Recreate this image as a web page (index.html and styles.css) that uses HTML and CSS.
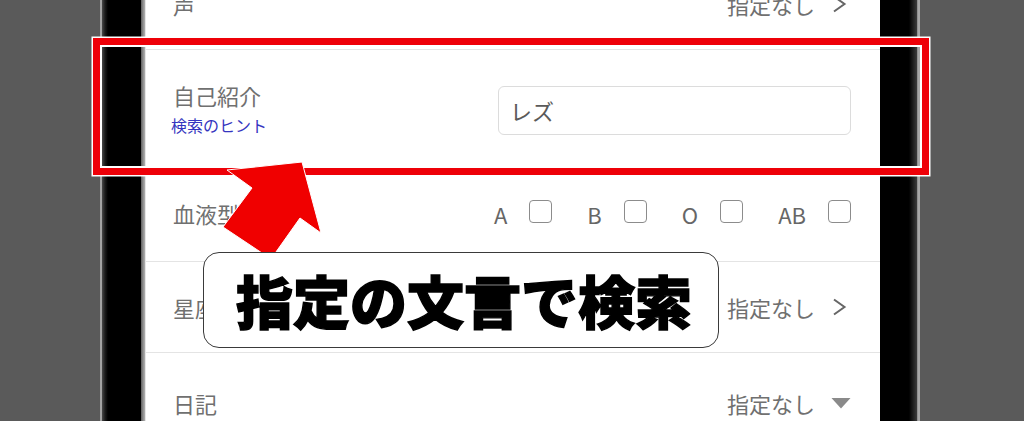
FILE: index.html
```html
<!DOCTYPE html>
<html lang="ja">
<head>
<meta charset="utf-8">
<title>検索条件</title>
<link rel="stylesheet" href="styles.css">
</head>
<body>
<div class="phone">
  <div class="bezel-l"></div>
  <div class="screen">
    <div class="list">
      <div class="row row-voice">
        <span class="label">声</span>
        <div class="value">
          <span>指定なし</span>
          <svg class="chev" viewBox="0 0 22 22"><path d="M5 3.5 L15.5 11 L5 18.5" fill="none" stroke="#666" stroke-width="2" stroke-linejoin="miter"/></svg>
        </div>
      </div>
      <div class="row row-intro">
        <div class="label-col">
          <span class="label">自己紹介</span>
          <span class="hint">検索のヒント</span>
        </div>
        <div class="input">レズ</div>
      </div>
      <div class="row row-blood">
        <span class="label">血液型</span>
        <div class="options">
          <div class="opt"><span>A</span><span class="cb"></span></div>
          <div class="opt"><span>B</span><span class="cb"></span></div>
          <div class="opt"><span>O</span><span class="cb"></span></div>
          <div class="opt"><span>AB</span><span class="cb"></span></div>
        </div>
      </div>
      <div class="row">
        <span class="label">星座</span>
        <div class="value">
          <span>指定なし</span>
          <svg class="chev" viewBox="0 0 22 22"><path d="M5 3.5 L15.5 11 L5 18.5" fill="none" stroke="#666" stroke-width="2"/></svg>
        </div>
      </div>
      <div class="row row-diary">
        <span class="label">日記</span>
        <div class="value">
          <span>指定なし</span>
          <svg class="chev" viewBox="0 0 22 22"><polygon points="2.5,6 21.5,6 12,16.5" fill="#8a8a8a"/></svg>
        </div>
      </div>
    </div>
  </div>
  <div class="bezel-r"></div>
</div>

<div class="highlight"></div>
<svg class="arrow" viewBox="0 0 1024 421" width="1024" height="421">
  <polygon points="302,162 321,233 300,218 271,259 223,227 252,188 227,170" fill="#f00000" stroke="#ffffff" stroke-width="1" stroke-linejoin="miter"/>
</svg>
<div class="callout"><span>指定の文言で検索</span></div>
</body>
</html>
```

FILE: styles.css
```css
* { box-sizing: content-box; }
html, body {
  margin: 0;
  padding: 0;
  width: 1024px;
  height: 421px;
  overflow: hidden;
  background: #5a5a5a;
  font-family: "Noto Sans CJK JP", "Noto Sans", sans-serif;
}
.phone {
  display: flex;
  margin-left: 100px;
  width: 820px;
  height: 421px;
}
.bezel-l {
  width: 46px;
  flex: none;
  background: linear-gradient(to right,
    #a4a4a4 0, #a4a4a4 2px,
    #4a4a4a 2px, #1c1c1c 5px, #000 8px,
    #000 41px, #5e5e5e 41px, #8c8c8c 43px, #b0b0b0 45px, #e6e6e6 45px, #e6e6e6 46px);
}
.bezel-r {
  width: 40px;
  flex: none;
  background: linear-gradient(to right,
    #000 0, #000 29px, #1e1e1e 33px, #3c3c3c 37px,
    #7a7a7a 37px, #a8a8a8 38px, #a8a8a8 40px);
}
.screen {
  width: 734px;
  flex: none;
  background: #fff;
  overflow: hidden;
}
.list {
  margin-top: -41px;
}
.row {
  display: flex;
  align-items: center;
  justify-content: space-between;
  height: 90px;
  padding: 0 29px 0 27px;
  border-bottom: 1px solid #e4e4e4;
  color: #707070;
  font-size: 22px;
}
.row-intro { height: 120px; }
.row-blood { height: 84px; padding-bottom: 6px; }
.row-diary { height: 100px; }
.label { line-height: 28px; }
.value {
  display: flex;
  align-items: center;
  gap: 14px;
}
.chev {
  width: 22px;
  height: 22px;
  display: block;
}
.label-col {
  display: flex;
  flex-direction: column;
  gap: 5px;
  margin-top: -4px;
}
.hint {
  font-size: 16px;
  line-height: 22px;
  color: #3535c0;
  margin-left: -2px;
}
.input {
  width: 340px;
  height: 47px;
  padding-left: 11px;
  border: 1px solid #dcdcdc;
  border-radius: 6px;
  display: flex;
  align-items: center;
  color: #5a5a5a;
  font-size: 22px;
}
.options {
  display: flex;
  align-items: center;
  gap: 35px;
}
.opt {
  display: flex;
  align-items: center;
  gap: 22px;
  font-size: 22px;
  color: #666;
}
.opt span:first-child { padding-top: 2px; }
.cb {
  width: 21px;
  height: 21px;
  border: 1.5px solid #8c8c8c;
  border-radius: 4px;
  margin-top: -4px;
}
.highlight {
  position: absolute;
  left: 93px;
  top: 38px;
  width: 822px;
  height: 123px;
  border: 7px solid #ee0008;
  box-shadow: 0 0 0 1.5px #fff, inset 0 0 0 2px #fff;
}
.arrow {
  position: absolute;
  left: 0;
  top: 0;
  pointer-events: none;
}
.callout {
  position: absolute;
  left: 203px;
  top: 252px;
  width: 482px;
  height: 94px;
  padding-left: 32px;
  border: 1.5px solid #3a3a3a;
  border-radius: 16px;
  background: #fff;
  display: flex;
  align-items: center;
}
.callout span {
  font-size: 57px;
  font-weight: 900;
  color: #000;
  line-height: 1;
  -webkit-text-stroke: 1.4px #000;
  white-space: nowrap;
  margin-top: -2px;
}
```
